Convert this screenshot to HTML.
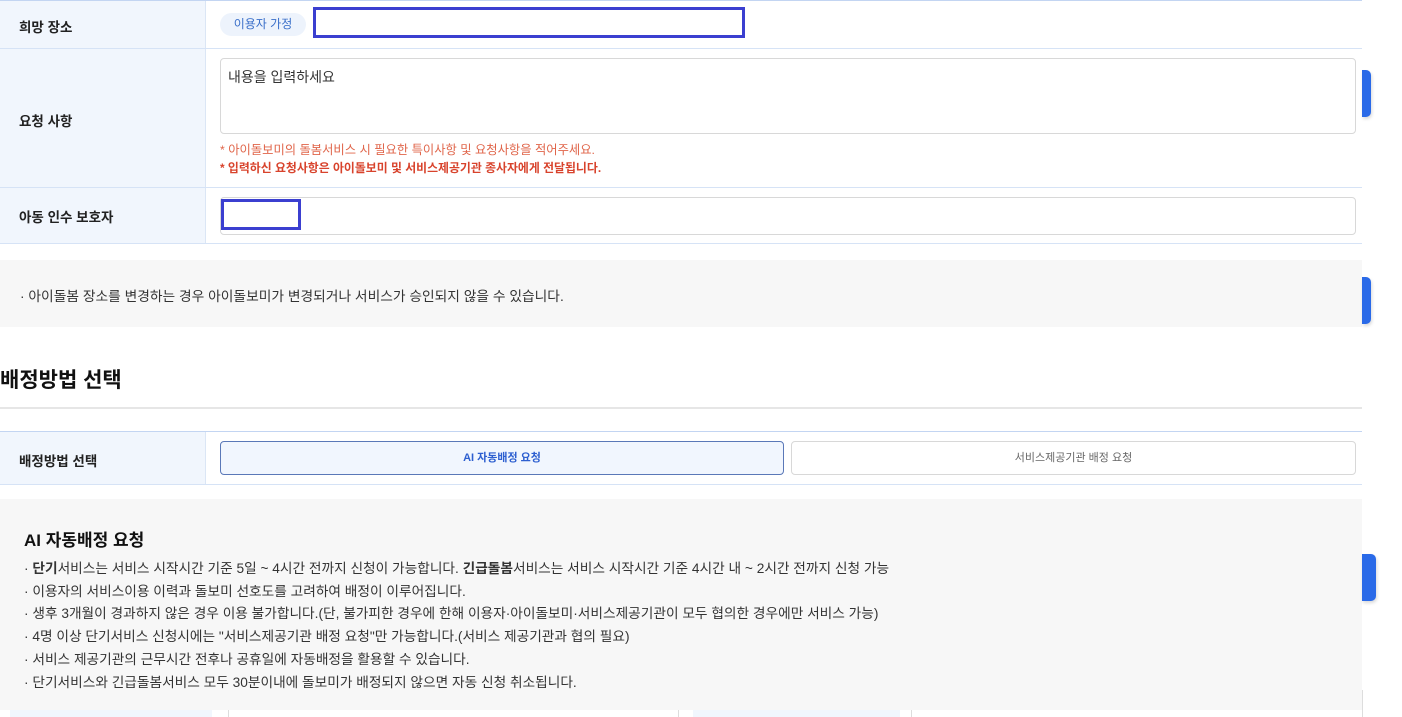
<!DOCTYPE html>
<html><head><meta charset="utf-8"><style>
*{margin:0;padding:0;box-sizing:border-box}
body{width:1402px;height:717px;overflow:hidden;background:#fff;font-family:"Liberation Sans","Noto Sans CJK KR",sans-serif;color:#222;position:relative}
.a{position:absolute}
.lab{position:absolute;left:0;width:206px;background:#f1f6fd;border-right:1px solid #dbe6f5}
.lt{position:absolute;left:19px;font-size:13.5px;font-weight:bold;color:#222}
.hl{position:absolute;left:0;width:1362px;height:1px;background:#d6e3f6}
.li{position:absolute;left:24px;font-size:13.7px;color:#333;white-space:nowrap}
.bb{position:absolute;left:1362px;width:9px;background:#2a6ae8;border-radius:0 5px 5px 0;box-shadow:1px 2px 3px rgba(0,0,0,.15)}
</style></head><body>
<div class="hl" style="top:0;background:#c3d5f2"></div>
<div class="lab" style="top:1px;height:47px"></div>
<div class="lt" style="top:16px">희망 장소</div>
<div class="a" style="left:220px;top:13px;width:86px;height:23px;background:#edf3fc;border-radius:12px;color:#3a6fc9;font-size:12px;line-height:23px;text-align:center">이용자 가정</div>
<div class="a" style="left:313px;top:7px;width:432px;height:31px;border:3px solid #3b3fd0"></div>
<div class="hl" style="top:48px"></div>
<div class="lab" style="top:49px;height:138px"></div>
<div class="lt" style="top:110px">요청 사항</div>
<div class="a" style="left:220px;top:58px;width:1136px;height:76px;border:1px solid #d8d8d8;border-radius:4px;font-size:14px;padding:8px 0 0 7px;color:#333">내용을 입력하세요</div>
<div class="a" style="left:220px;top:140px;font-size:12.3px;color:#e0654a">* 아이돌보미의 돌봄서비스 시 필요한 특이사항 및 요청사항을 적어주세요.</div>
<div class="a" style="left:220px;top:159px;font-size:11.9px;color:#d8432c;font-weight:bold">* 입력하신 요청사항은 아이돌보미 및 서비스제공기관 종사자에게 전달됩니다.</div>
<div class="hl" style="top:187px"></div>
<div class="lab" style="top:188px;height:55px"></div>
<div class="lt" style="top:206px">아동 인수 보호자</div>
<div class="a" style="left:220px;top:197px;width:1136px;height:38px;border:1px solid #d8d8d8;border-radius:4px"></div>
<div class="a" style="left:221px;top:199px;width:80px;height:31px;border:3px solid #3b3fd0;background:#fff"></div>
<div class="hl" style="top:243px"></div>
<div class="a" style="left:0;top:260px;width:1362px;height:67px;background:#f7f7f7"></div>
<div class="a" style="left:20px;top:285px;font-size:13.75px;color:#333">· 아이돌봄 장소를 변경하는 경우 아이돌보미가 변경되거나 서비스가 승인되지 않을 수 있습니다.</div>
<div class="a" style="left:0;top:364px;font-size:21px;font-weight:bold;color:#111">배정방법 선택</div>
<div class="a" style="left:0;top:407px;width:1362px;height:2px;background:#e6e6e6"></div>
<div class="hl" style="top:431px;background:#c3d5f2"></div>
<div class="lab" style="top:432px;height:52px"></div>
<div class="lt" style="top:450px">배정방법 선택</div>
<div class="a" style="left:220px;top:441px;width:564px;height:34px;border:1px solid #5a78b8;border-radius:4px;background:#f1f6fe;color:#2d5fd0;font-size:11px;font-weight:bold;line-height:32px;text-align:center">AI 자동배정 요청</div>
<div class="a" style="left:791px;top:441px;width:565px;height:34px;border:1px solid #d8d8d8;border-radius:4px;color:#666;font-size:11px;line-height:32px;text-align:center">서비스제공기관 배정 요청</div>
<div class="hl" style="top:484px"></div>
<div class="a" style="left:0;top:499px;width:1362px;height:211px;background:#f7f7f7"></div>
<div class="a" style="left:24px;top:526px;font-size:17px;font-weight:bold;color:#111">AI 자동배정 요청</div>
<div class="li" style="top:557px">· <b>단기</b>서비스는 서비스 시작시간 기준 5일 ~ 4시간 전까지 신청이 가능합니다. <b>긴급돌봄</b>서비스는 서비스 시작시간 기준 4시간 내 ~ 2시간 전까지 신청 가능</div>
<div class="li" style="top:580px">· 이용자의 서비스이용 이력과 돌보미 선호도를 고려하여 배정이 이루어집니다.</div>
<div class="li" style="top:602px">· 생후 3개월이 경과하지 않은 경우 이용 불가합니다.(단, 불가피한 경우에 한해 이용자·아이돌보미·서비스제공기관이 모두 협의한 경우에만 서비스 가능)</div>
<div class="li" style="top:625px">· 4명 이상 단기서비스 신청시에는 "서비스제공기관 배정 요청"만 가능합니다.(서비스 제공기관과 협의 필요)</div>
<div class="li" style="top:648px">· 서비스 제공기관의 근무시간 전후나 공휴일에 자동배정을 활용할 수 있습니다.</div>
<div class="li" style="top:671px">· 단기서비스와 긴급돌봄서비스 모두 30분이내에 돌보미가 배정되지 않으면 자동 신청 취소됩니다.</div>
<div class="a" style="left:10px;top:710px;width:202px;height:7px;background:#f1f6fd"></div>
<div class="a" style="left:228px;top:710px;width:1px;height:7px;background:#ddd"></div>
<div class="a" style="left:678px;top:710px;width:1px;height:7px;background:#ddd"></div>
<div class="a" style="left:693px;top:710px;width:207px;height:7px;background:#f1f6fd"></div>
<div class="a" style="left:911px;top:710px;width:1px;height:7px;background:#ddd"></div>
<div class="a" style="left:1362px;top:690px;width:1px;height:27px;background:#ddd"></div>
<div class="bb" style="top:70px;height:47px"></div>
<div class="bb" style="top:277px;height:47px"></div>
<div class="bb" style="top:554px;height:47px;width:14px"></div>
</body></html>
